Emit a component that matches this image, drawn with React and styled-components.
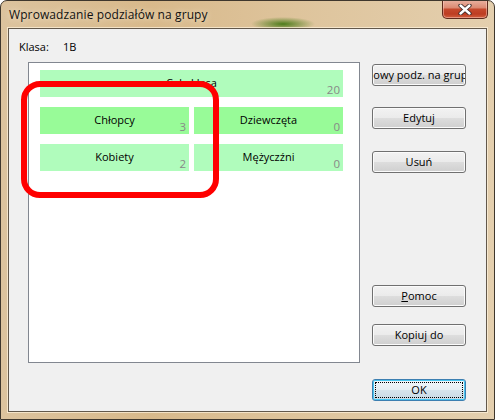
import React from 'react';
import styled, { createGlobalStyle } from 'styled-components';

const GlobalStyle = createGlobalStyle`
  html, body {
    margin: 0;
    padding: 0;
    background: #ffffff;
  }
`;

const Window = styled.div`
  position: relative;
  box-sizing: border-box;
  width: 495px;
  height: 420px;
  display: flex;
  flex-direction: column;
  border: 1px solid #3f372d;
  border-radius: 7px 7px 0 0;
  background:
    radial-gradient(ellipse 32px 7px at 282px 23px, rgba(70, 120, 20, 0.95), rgba(70, 120, 20, 0) 100%),
    linear-gradient(90deg, #dcc39e 0%, #d8b98b 30%, #dec49c 60%, #e4cfae 100%);
  font-family: 'Open Sans', 'Liberation Sans', sans-serif;
  overflow: hidden;
`;

const TitleBar = styled.div`
  height: 27px;
  display: flex;
  align-items: center;
  justify-content: space-between;
  padding: 0 6px 0 8px;
  flex-shrink: 0;
`;

const Title = styled.span`
  font-size: 12px;
  color: #111;
  text-shadow: 0 0 6px rgba(255, 245, 225, 0.9);
  letter-spacing: 0.1px;
`;

const CloseButton = styled.div`
  align-self: flex-start;
  width: 44px;
  height: 18px;
  margin-top: -1px;
  display: flex;
  align-items: center;
  justify-content: center;
  border: 1px solid #5e2a1c;
  border-top: none;
  border-radius: 0 0 5px 5px;
  background: linear-gradient(#eab3a2 0%, #dc8b74 42%, #c5482c 52%, #bd3d22 78%, #d2603f 100%);
  box-shadow: inset 0 0 0 1px rgba(255, 220, 210, 0.45);
`;

const Client = styled.div`
  flex: 1;
  margin: 0 7px 7px 7px;
  border: 1px solid #62584b;
  box-shadow: 0 0 0 1px rgba(255, 243, 222, 0.7);
  background: #f0f0f0;
  font-size: 11px;
  color: #000;
`;

const ClassRow = styled.div`
  display: flex;
  gap: 14px;
  padding: 11px 0 0 10px;
  height: 22px;
  box-sizing: content-box;
  line-height: 14px;
`;

const Main = styled.div`
  display: grid;
  grid-template-columns: 332px 94px;
  column-gap: 12px;
  align-items: start;
  padding-left: 19px;
`;

const Panel = styled.div`
  box-sizing: border-box;
  height: 301px;
  border: 1px solid #828790;
  background: #ffffff;
  padding: 7px 16px 0 11px;
  display: grid;
  grid-template-columns: 1fr 1fr;
  grid-auto-rows: 27px;
  column-gap: 5px;
  row-gap: 10px;
  align-content: start;
`;

const Cell = styled.div`
  position: relative;
  grid-column: ${(p) => (p.$wide ? '1 / span 2' : 'auto')};
  background: ${(p) => (p.$strong ? '#98fb98' : '#b0fcbc')};
  display: flex;
  justify-content: center;
  padding-top: 5px;
  box-sizing: border-box;
  line-height: 15px;
`;

const Count = styled.span`
  position: absolute;
  right: 3px;
  bottom: 0px;
  color: #888888;
  font-size: 11.5px;
  line-height: 14px;
`;

const Buttons = styled.div`
  display: flex;
  flex-direction: column;
  padding-top: 2px;
`;

const Button = styled.div`
  position: relative;
  box-sizing: border-box;
  height: 22px;
  margin-top: ${(p) => p.$mt || 0}px;
  display: flex;
  align-items: center;
  justify-content: center;
  white-space: nowrap;
  overflow: hidden;
  border: 1px solid ${(p) => (p.$default ? '#3c7fb1' : '#707070')};
  border-radius: 3px;
  background: ${(p) =>
    p.$default
      ? 'linear-gradient(#f2f7fa 0%, #e6eff4 48%, #d6e4ec 52%, #c8d9e4 100%)'
      : 'linear-gradient(#f2f2f2 0%, #ebebeb 48%, #dddddd 52%, #cfcfcf 100%)'};
  box-shadow: inset 0 0 0 1px ${(p) => (p.$default ? '#48c6f0' : '#fbfbfb')};
  line-height: 14px;

  &::after {
    content: '';
    display: ${(p) => (p.$default ? 'block' : 'none')};
    position: absolute;
    inset: 2px;
    border: 1px dotted #000;
  }
`;

const Mnemonic = styled.span`
  text-decoration: underline;
`;

const Annotation = styled.div`
  position: absolute;
  left: 20px;
  top: 80px;
  width: 198px;
  height: 117px;
  box-sizing: border-box;
  border: 6px solid #ff0000;
  border-radius: 19px;
  pointer-events: none;
`;

const CloseIcon = () => (
  <svg width="14" height="11" viewBox="0 0 14 11">
    <path d="M2.5 1.5 L11.5 9.5 M11.5 1.5 L2.5 9.5" stroke="#3b2a28" strokeWidth="4.2" strokeLinecap="round" />
    <path d="M2.5 1.5 L11.5 9.5 M11.5 1.5 L2.5 9.5" stroke="#ffffff" strokeWidth="2.4" strokeLinecap="round" />
  </svg>
);

const groups = [
  { label: 'Cała klasa', count: 20, wide: true },
  { label: 'Chłopcy', count: 3, strong: true },
  { label: 'Dziewczęta', count: 0, strong: true },
  { label: 'Kobiety', count: 2 },
  { label: 'Mężyczźni', count: 0 },
];

export default function App() {
  return (
    <>
      <GlobalStyle />
      <Window>
        <TitleBar>
          <Title>Wprowadzanie podziałów na grupy</Title>
          <CloseButton>
            <CloseIcon />
          </CloseButton>
        </TitleBar>
        <Client>
          <ClassRow>
            <span>Klasa:</span>
            <span>1B</span>
          </ClassRow>
          <Main>
            <Panel>
              {groups.map((g) => (
                <Cell key={g.label} $wide={g.wide} $strong={g.strong}>
                  {g.label}
                  <Count>{g.count}</Count>
                </Cell>
              ))}
            </Panel>
            <Buttons>
              <Button>Nowy podz. na grupy</Button>
              <Button $mt={21}>Edytuj</Button>
              <Button $mt={22}>Usuń</Button>
              <Button $mt={112}>
                <span>
                  <Mnemonic>P</Mnemonic>omoc
                </span>
              </Button>
              <Button $mt={17}>Kopiuj do</Button>
              <Button $mt={33} $default>OK</Button>
            </Buttons>
          </Main>
        </Client>
        <Annotation />
      </Window>
    </>
  );
}
